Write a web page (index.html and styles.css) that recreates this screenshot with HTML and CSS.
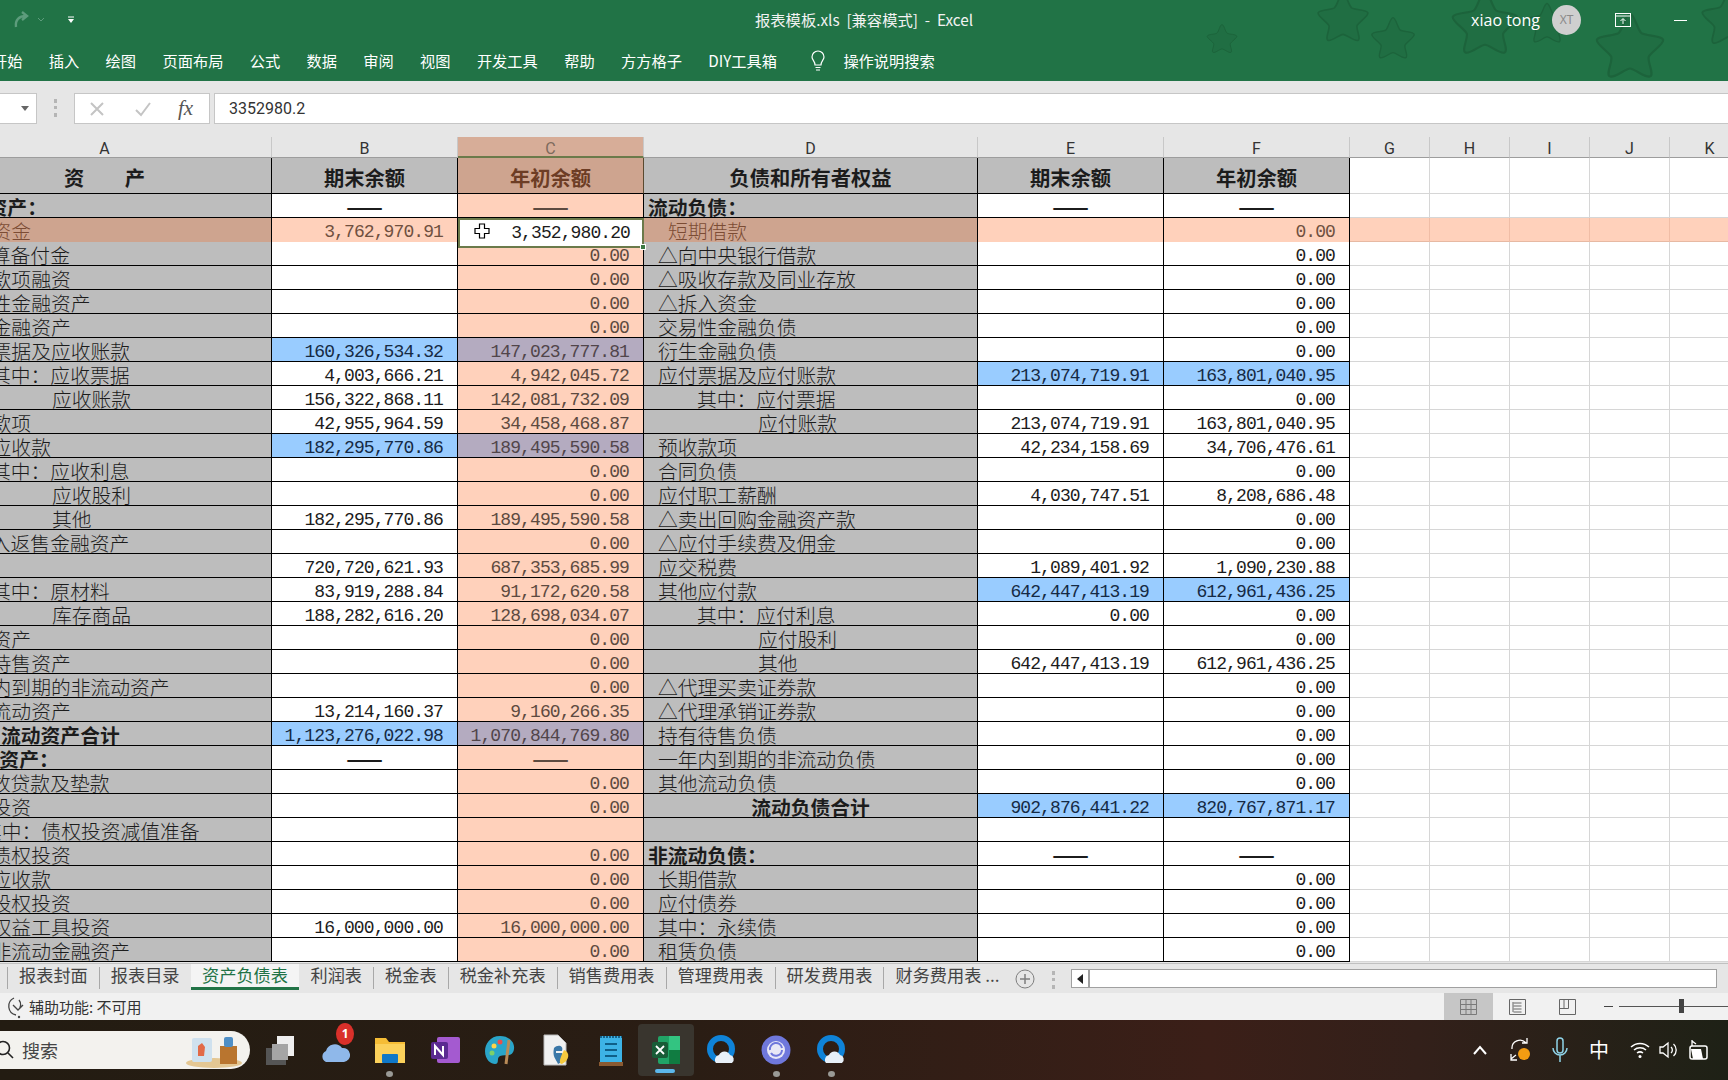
FILE: index.html
```html
<!DOCTYPE html>
<html lang="zh-CN">
<head>
<meta charset="utf-8">
<title>报表模板.xls - Excel</title>
<link rel="stylesheet" href="styles.css">
</head>
<body>
<svg class="defs" width="0" height="0"><symbol id="star" viewBox="0 0 100 100"><path d="M50 8 C56 8 60 30 66 35 C72 39 94 38 96 44 C98 50 78 62 76 68 C74 75 84 92 78 95 C72 98 56 84 50 84 C44 84 28 98 22 95 C16 92 26 75 24 68 C22 62 2 50 4 44 C6 38 28 39 34 35 C40 30 44 8 50 8Z"/></symbol></svg>

<header class="ribbon">
  <div class="stars">
    <svg class="st st1"><use href="#star"/></svg>
    <svg class="st st2"><use href="#star"/></svg>
    <svg class="st st3"><use href="#star"/></svg>
    <svg class="st st4"><use href="#star"/></svg>
    <svg class="st st5"><use href="#star"/></svg>
    <svg class="st st6"><use href="#star"/></svg>
    <svg class="st st7"><use href="#star"/></svg>
  </div>
  <div class="titlebar">
    <div class="qat">
      <svg width="20" height="20" viewBox="0 0 20 20"><path d="M4 17 C3 10 7 6 14 6 M10 2 L15 6 L10 10" fill="none" stroke="#5d9c7c" stroke-width="2.4"/></svg>
      <svg width="8" height="6" viewBox="0 0 8 6"><path d="M1 1 L4 4 L7 1" fill="none" stroke="#5d9c7c"/></svg>
      <svg class="qat-more" width="8" height="8" viewBox="0 0 8 8"><path d="M1 1H7" stroke="#fff"/><path d="M1 3H7L4 7Z" fill="#fff"/></svg>
    </div>
    <div class="title">报表模板.xls&nbsp; [兼容模式]&nbsp; -&nbsp; Excel</div>
    <div class="user">
      <span class="uname">xiao tong</span>
      <span class="avatar">XT</span>
      <svg class="ribbon-opt" width="16" height="14" viewBox="0 0 16 14"><rect x=".5" y=".5" width="15" height="13" fill="none" stroke="#fff"/><path d="M1 3H15" stroke="#fff"/><path d="M8 11V6M5.5 8L8 5.5L10.500 8" fill="none" stroke="#fff"/></svg>
      <span class="minimize"></span>
    </div>
  </div>
  <nav class="tabs">
    <span>开始</span><span>插入</span><span>绘图</span><span>页面布局</span><span>公式</span><span>数据</span><span>审阅</span><span>视图</span><span>开发工具</span><span>帮助</span><span>方方格子</span><span>DIY工具箱</span>
    <span class="tell">
      <svg width="16" height="22" viewBox="0 0 16 22"><path d="M5 15 C5 11 2 10 2 7 A6 6 0 0 1 14 7 C14 10 11 11 11 15Z M5.500 17.500H10.500 M6 20H10" fill="none" stroke="#fff" stroke-width="1.200"/></svg>
      操作说明搜索
    </span>
  </nav>
</header>

<section class="fbar">
  <div class="namebox"><svg width="8" height="5" viewBox="0 0 8 5"><path d="M0 0H8L4 5Z" fill="#666"/></svg></div>
  <div class="gripper"></div>
  <div class="fbtns">
    <svg width="16" height="16" viewBox="0 0 16 16"><path d="M2 2L14 14M14 2L2 14" stroke="#c4c4c4" stroke-width="2"/></svg>
    <svg width="18" height="16" viewBox="0 0 18 16"><path d="M2 9L7 14L16 2" fill="none" stroke="#c4c4c4" stroke-width="2"/></svg>
    <span class="fx">fx</span>
  </div>
  <div class="finput">3352980.2</div>
</section>

<main class="wrap">
  <div class="sheet">
    <div class="heads">
      <div>A</div><div>B</div><div class="on">C</div><div>D</div><div>E</div><div>F</div><div>G</div><div>H</div><div>I</div><div>J</div><div>K</div>
    </div>
    <div class="row top"><div class="t">资　　产</div><div class="t">期末余额</div><div class="t tc">年初余额</div><div class="t">负债和所有者权益</div><div class="t">期末余额</div><div class="t">年初余额</div></div>
    <div class="row"><div class="l i8 s">流动资产：</div><div class="n d">——</div><div class="n p d">——</div><div class="l i9 s">流动负债：</div><div class="n d">——</div><div class="n d">——</div></div>
    <div class="row h"><div class="l i1">货币资金</div><div class="n">3,762,970.91</div><div class="n sel"><svg class="cross" width="16" height="16" viewBox="0 0 16 16"><path d="M5.500 1H10.500V5.500H15V10.500H10.500V15H5.500V10.500H1V5.500H5.500Z" fill="#fff" stroke="#000" stroke-width="1.200"/></svg>3,352,980.20<span class="handle"></span></div><div class="l i6">短期借款</div><div class="n"></div><div class="n">0.00</div></div>
    <div class="row"><div class="l i7">结算备付金</div><div class="n"></div><div class="n p">0.00</div><div class="l i1">△向中央银行借款</div><div class="n"></div><div class="n">0.00</div></div>
    <div class="row"><div class="l i1">应收款项融资</div><div class="n"></div><div class="n p">0.00</div><div class="l i1">△吸收存款及同业存放</div><div class="n"></div><div class="n">0.00</div></div>
    <div class="row"><div class="l i1">交易性金融资产</div><div class="n"></div><div class="n p">0.00</div><div class="l i1">△拆入资金</div><div class="n"></div><div class="n">0.00</div></div>
    <div class="row"><div class="l i1">衍生金融资产</div><div class="n"></div><div class="n p">0.00</div><div class="l i1">交易性金融负债</div><div class="n"></div><div class="n">0.00</div></div>
    <div class="row"><div class="l i1">应收票据及应收账款</div><div class="n b">160,326,534.32</div><div class="n m">147,023,777.81</div><div class="l i1">衍生金融负债</div><div class="n"></div><div class="n">0.00</div></div>
    <div class="row"><div class="l i2">其中：应收票据</div><div class="n">4,003,666.21</div><div class="n p">4,942,045.72</div><div class="l i1">应付票据及应付账款</div><div class="n b">213,074,719.91</div><div class="n b">163,801,040.95</div></div>
    <div class="row"><div class="l i3">应收账款</div><div class="n">156,322,868.11</div><div class="n p">142,081,732.09</div><div class="l i2">其中：应付票据</div><div class="n"></div><div class="n">0.00</div></div>
    <div class="row"><div class="l i1">预付款项</div><div class="n">42,955,964.59</div><div class="n p">34,458,468.87</div><div class="l i3">应付账款</div><div class="n">213,074,719.91</div><div class="n">163,801,040.95</div></div>
    <div class="row"><div class="l i1">其他应收款</div><div class="n b">182,295,770.86</div><div class="n m">189,495,590.58</div><div class="l i1">预收款项</div><div class="n">42,234,158.69</div><div class="n">34,706,476.61</div></div>
    <div class="row"><div class="l i2">其中：应收利息</div><div class="n"></div><div class="n p">0.00</div><div class="l i1">合同负债</div><div class="n"></div><div class="n">0.00</div></div>
    <div class="row"><div class="l i3">应收股利</div><div class="n"></div><div class="n p">0.00</div><div class="l i1">应付职工薪酬</div><div class="n">4,030,747.51</div><div class="n">8,208,686.48</div></div>
    <div class="row"><div class="l i3">其他</div><div class="n">182,295,770.86</div><div class="n p">189,495,590.58</div><div class="l i1">△卖出回购金融资产款</div><div class="n"></div><div class="n">0.00</div></div>
    <div class="row"><div class="l i7">买入返售金融资产</div><div class="n"></div><div class="n p">0.00</div><div class="l i1">△应付手续费及佣金</div><div class="n"></div><div class="n">0.00</div></div>
    <div class="row"><div class="l i1">存货</div><div class="n">720,720,621.93</div><div class="n p">687,353,685.99</div><div class="l i1">应交税费</div><div class="n">1,089,401.92</div><div class="n">1,090,230.88</div></div>
    <div class="row"><div class="l i2">其中：原材料</div><div class="n">83,919,288.84</div><div class="n p">91,172,620.58</div><div class="l i1">其他应付款</div><div class="n b">642,447,413.19</div><div class="n b">612,961,436.25</div></div>
    <div class="row"><div class="l i3">库存商品</div><div class="n">188,282,616.20</div><div class="n p">128,698,034.07</div><div class="l i2">其中：应付利息</div><div class="n">0.00</div><div class="n">0.00</div></div>
    <div class="row"><div class="l i1">合同资产</div><div class="n"></div><div class="n p">0.00</div><div class="l i3">应付股利</div><div class="n"></div><div class="n">0.00</div></div>
    <div class="row"><div class="l i1">持有待售资产</div><div class="n"></div><div class="n p">0.00</div><div class="l i3">其他</div><div class="n">642,447,413.19</div><div class="n">612,961,436.25</div></div>
    <div class="row"><div class="l i1">一年内到期的非流动资产</div><div class="n"></div><div class="n p">0.00</div><div class="l i1">△代理买卖证券款</div><div class="n"></div><div class="n">0.00</div></div>
    <div class="row"><div class="l i1">其他流动资产</div><div class="n">13,214,160.37</div><div class="n p">9,160,266.35</div><div class="l i1">△代理承销证券款</div><div class="n"></div><div class="n">0.00</div></div>
    <div class="row"><div class="l i4 s">流动资产合计</div><div class="n b">1,123,276,022.98</div><div class="n m">1,070,844,769.80</div><div class="l i1">持有待售负债</div><div class="n"></div><div class="n">0.00</div></div>
    <div class="row"><div class="l i0 s">非流动资产：</div><div class="n d">——</div><div class="n p d">——</div><div class="l i1">一年内到期的非流动负债</div><div class="n"></div><div class="n">0.00</div></div>
    <div class="row"><div class="l i7">发放贷款及垫款</div><div class="n"></div><div class="n p">0.00</div><div class="l i1">其他流动负债</div><div class="n"></div><div class="n">0.00</div></div>
    <div class="row"><div class="l i1">债权投资</div><div class="n"></div><div class="n p">0.00</div><div class="l ctr s">流动负债合计</div><div class="n b">902,876,441.22</div><div class="n b">820,767,871.17</div></div>
    <div class="row"><div class="l i5">其中：债权投资减值准备</div><div class="n"></div><div class="n p"></div><div class="l"></div><div class="n"></div><div class="n"></div></div>
    <div class="row"><div class="l i1">其他债权投资</div><div class="n"></div><div class="n p">0.00</div><div class="l i9 s">非流动负债：</div><div class="n d">——</div><div class="n d">——</div></div>
    <div class="row"><div class="l i1">长期应收款</div><div class="n"></div><div class="n p">0.00</div><div class="l i1">长期借款</div><div class="n"></div><div class="n">0.00</div></div>
    <div class="row"><div class="l i1">长期股权投资</div><div class="n"></div><div class="n p">0.00</div><div class="l i1">应付债券</div><div class="n"></div><div class="n">0.00</div></div>
    <div class="row"><div class="l i1">其他权益工具投资</div><div class="n">16,000,000.00</div><div class="n p">16,000,000.00</div><div class="l i1">其中：永续债</div><div class="n"></div><div class="n">0.00</div></div>
    <div class="row"><div class="l i1">其他非流动金融资产</div><div class="n"></div><div class="n p">0.00</div><div class="l i1">租赁负债</div><div class="n"></div><div class="n">0.00</div></div>
  </div>
</main>

<section class="sheettabs">
  <div class="tablist">
    <span>报表封面</span><span>报表目录</span><span class="act">资产负债表</span><span>利润表</span><span>税金表</span><span>税金补充表</span><span>销售费用表</span><span>管理费用表</span><span>研发费用表</span><span>财务费用表 ...</span>
  </div>
  <svg class="plus" width="20" height="20" viewBox="0 0 20 20"><circle cx="10" cy="10" r="9" fill="none" stroke="#7f7f7f"/><path d="M10 5V15M5 10H15" stroke="#7f7f7f" stroke-width="1.500"/></svg>
  <div class="gripper g2"></div>
  <div class="hscroll"><div class="sbtn"><svg width="6" height="10" viewBox="0 0 6 10"><path d="M6 0V10L0 5Z" fill="#222"/></svg></div></div>
</section>

<footer class="status">
  <svg width="22" height="24" viewBox="0 0 22 24"><path d="M7 3A9 9 0 0 0 9 20M6 10L11 15L16 10M11 15A7 7 0 0 0 12 5" fill="none" stroke="#444" stroke-width="1.300"/><circle cx="12" cy="22" r="1.200" fill="#444"/></svg>
  <span class="acc">辅助功能: 不可用</span>
  <div class="views">
    <div class="vb vb-on"><svg width="17" height="16" viewBox="0 0 17 16"><path d="M.5.5H16.500V15.500H.5ZM.5 5.500H16.500M.5 10.500H16.500M6 .5V15.500M11 .5V15.500" fill="none" stroke="#7a7a7a"/></svg></div>
    <div class="vb"><svg width="17" height="16" viewBox="0 0 17 16"><path d="M.5.5H16.500V15.500H.5ZM4.500 4H12.500M4.500 7H12.500M4.500 10H12.500M4.500 13H12.500M4 3V13" fill="none" stroke="#666"/></svg></div>
    <div class="vb"><svg width="17" height="16" viewBox="0 0 17 16"><path d="M.5.5H16.500V15.500H.5ZM.5 9.500H9.500V.5M5 9.500V.5" fill="none" stroke="#666"/></svg></div>
  </div>
  <div class="zoom"><span class="zminus"></span><div class="ztrack"><span class="zthumb"></span></div></div>
</footer>

<footer class="taskbar">
  <div class="search">
    <svg class="mag" width="18" height="20" viewBox="0 0 18 20"><circle cx="4" cy="8" r="6.500" fill="none" stroke="#222" stroke-width="1.600"/><path d="M9 13L14 18" stroke="#222" stroke-width="1.600"/></svg>
    <span>搜索</span>
    <svg class="pill-art" width="56" height="36" viewBox="0 0 56 36"><ellipse cx="28" cy="31" rx="28" ry="5" fill="#e4c793"/><rect x="6" y="6" width="20" height="24" rx="2" fill="#cfe1ee"/><path d="M12 14L16 11L19 15L18 24L12 24Z" fill="#e26a47"/><rect x="34" y="14" width="17" height="18" fill="#b9752f"/><rect x="38" y="5" width="9" height="10" rx="2" fill="#4f8fc6"/></svg>
  </div>
  <div class="apps">
    <div class="app"><svg width="30" height="30" viewBox="0 0 30 30"><rect x="12" y="1" width="17" height="20" fill="#eee"/><rect x="1" y="13" width="20" height="17" fill="#555"/><rect x="7" y="9" width="16" height="16" fill="#a5a5a5"/></svg></div>
    <div class="app weather"><svg width="30" height="30" viewBox="0 0 30 30"><path d="M6 27A6 6 0 0 1 6 16A9 9 0 0 1 22 13A7 7 0 0 1 24 27Z" fill="#8fb8ea"/></svg><span class="badge">1</span></div>
    <div class="app"><svg width="30" height="30" viewBox="0 0 30 30"><path d="M0 3H11L14 7H30V28H0Z" fill="#f5bd36"/><rect y="9" width="30" height="19" fill="#fbd15b"/><rect x="7" y="19" width="16" height="9" rx="1" fill="#0f78c8"/></svg><span class="dot"></span></div>
    <div class="app"><svg width="30" height="30" viewBox="0 0 30 30"><rect x="7" y="2" width="23" height="26" rx="2" fill="#a45ad0"/><rect x="1" y="7" width="17" height="17" rx="2" fill="#5b2a91"/><path d="M5 20V11L13 20V11" fill="none" stroke="#fff" stroke-width="2"/></svg></div>
    <div class="app"><svg width="30" height="32" viewBox="0 0 30 32"><path d="M15 2C5 2 0 10 0 17C0 26 6 30 10 30C15 30 11 24 15 22C19 20 28 24 29 15C30 8 24 2 15 2Z" fill="#2aa5c9"/><circle cx="9" cy="12" r="2.500" fill="#ffd44a"/><circle cx="15" cy="8" r="2.500" fill="#e9504b"/><circle cx="7" cy="19" r="2.500" fill="#7dd16a"/><path d="M24 6L21 30" stroke="#b98b57" stroke-width="3"/></svg></div>
    <div class="app"><svg width="28" height="32" viewBox="0 0 28 32"><path d="M2 1H16L24 9V31H2Z" fill="#f1f1f1" stroke="#bbb"/><path d="M12 14C16 10 22 12 20 17H14V19H20C24 24 20 28 16 30C14 25 10 23 12 14Z" fill="#3b78a8"/><path d="M22 16C28 18 28 26 20 30C16 30 18 24 22 16Z" fill="#f5c93e"/></svg></div>
    <div class="app"><svg width="24" height="32" viewBox="0 0 24 32"><rect x="1" y="2" width="22" height="28" fill="#3db3e6"/><rect y="28" width="24" height="4" fill="#8a5a32"/><path d="M6 10H18M6 16H18M6 22H18" stroke="#0f5f88" stroke-width="2"/><path d="M1 3H23" stroke="#16638b" stroke-width="2" stroke-dasharray="2 1"/></svg></div>
    <div class="app app-on"><svg width="30" height="30" viewBox="0 0 30 30"><rect x="7" y="1" width="22" height="28" rx="2" fill="#21a366"/><rect x="18" y="1" width="11" height="14" fill="#33c481"/><rect x="18" y="15" width="11" height="14" fill="#107c41"/><rect x="1" y="7" width="16" height="16" rx="2" fill="#185c37"/><path d="M5 11L13 19M13 11L5 19" stroke="#fff" stroke-width="1.800"/></svg><span class="bar"></span></div>
    <div class="app"><svg width="30" height="30" viewBox="0 0 30 30"><circle cx="15" cy="14" r="11" fill="none" stroke="#0f83d8" stroke-width="6"/><path d="M10 28A5 5 0 0 1 13 20A6 6 0 0 1 24 20A4.500 4.500 0 0 1 26 28Z" fill="#e8f0f8"/></svg></div>
    <div class="app"><svg width="30" height="30" viewBox="0 0 30 30"><circle cx="15" cy="15" r="14.500" fill="#6f78dc"/><circle cx="15" cy="15" r="9" fill="#e8e8f6"/><path d="M9 15A6 6 0 0 1 21 13M21 15A6 6 0 0 1 10 18" fill="none" stroke="#6f78dc" stroke-width="2"/></svg><span class="dot"></span></div>
    <div class="app"><svg width="30" height="30" viewBox="0 0 30 30"><circle cx="15" cy="14" r="11" fill="none" stroke="#0f83d8" stroke-width="6"/><path d="M10 28A5 5 0 0 1 13 20A6 6 0 0 1 24 20A4.500 4.500 0 0 1 26 28Z" fill="#e8f0f8"/></svg><span class="dot"></span></div>
  </div>
  <div class="tray">
    <svg width="16" height="12" viewBox="0 0 16 12"><path d="M2 10L8 3L14 10" fill="none" stroke="#fff" stroke-width="2"/></svg>
    <svg width="22" height="26" viewBox="0 0 22 26"><path d="M3 12A8 8 0 0 1 17 6M18 1V6H13M2 17V23H8M2 22L7 18" fill="none" stroke="#fff" stroke-width="1.300"/><circle cx="15" cy="17" r="6" fill="#f39c12"/></svg>
    <svg width="16" height="26" viewBox="0 0 16 26"><rect x="5" y="1" width="6" height="15" rx="3" fill="none" stroke="#8fd3e8" stroke-width="1.500"/><path d="M1 11A7 7 0 0 0 15 11M8 18V25" fill="none" stroke="#8fd3e8" stroke-width="1.500"/></svg>
    <span class="ime">中</span>
    <svg width="20" height="18" viewBox="0 0 20 18"><path d="M1 6A13 13 0 0 1 19 6M4 9A9 9 0 0 1 16 9M7 12A5 5 0 0 1 13 12" fill="none" stroke="#fff" stroke-width="1.500"/><circle cx="10" cy="15.500" r="1.500" fill="#fff"/></svg>
    <svg class="spk" width="18" height="20" viewBox="0 0 18 20"><path d="M1 7H4L9 3V17L4 13H1Z" fill="none" stroke="#fff" stroke-width="1.300"/><path d="M12 7A4 4 0 0 1 12 13M14.500 4A8 8 0 0 1 14.500 16" fill="none" stroke="#fff" stroke-width="1.300"/></svg>
    <svg class="batt" width="20" height="22" viewBox="0 0 20 22"><rect x="1" y="7" width="17" height="13" rx="2" fill="none" stroke="#fff" stroke-width="1.500"/><path d="M4 20L2 10H12L14 20Z" fill="#fff"/><path d="M3 1V7M3 2L7 5" stroke="#fff" stroke-width="1.300"/></svg>
  </div>
</footer>
</body>
</html>
```
FILE: styles.css
```css
* { box-sizing: border-box; }
html, body { margin: 0; padding: 0; height: 1080px; overflow: hidden; background: #e6e6e6; }
body { display: flex; flex-direction: column; font-family: "Noto Sans CJK SC", "Noto Sans", sans-serif; color: #222; }
svg { display: block; flex: none; }
.defs { position: absolute; }

/* ribbon */
.ribbon { position: relative; flex: none; height: 81px; background: #217346; color: #fff; overflow: hidden; }
.stars { position: absolute; inset: 0; }
.st { position: absolute; fill: #206e43; stroke: #1c633b; stroke-width: 3; }
.st1 { left: 1206px; top: 20px; width: 32px; height: 36px; }
.st2 { left: 1316px; top: -12px; width: 54px; height: 56px; }
.st3 { left: 1370px; top: 14px; width: 46px; height: 46px; }
.st4 { left: 1450px; top: -14px; width: 70px; height: 70px; }
.st5 { left: 1522px; top: 0; width: 50px; height: 44px; }
.st6 { left: 1590px; top: 8px; width: 80px; height: 72px; }
.st7 { left: 1700px; top: -14px; width: 60px; height: 60px; }
.titlebar { position: relative; height: 40px; display: grid; grid-template-columns: 1fr auto 1fr; align-items: center; }
.qat { display: flex; align-items: center; gap: 5px; padding-left: 12px; }
.qat-more { margin-left: 17px; }
.title { font-size: 15.300px; color: #f2f2f2; padding-bottom: 2px; }
.user { display: flex; align-items: center; justify-content: flex-end; padding-right: 41px; }
.uname { font-size: 16px; font-family: "Open Sans", sans-serif; }
.avatar { width: 29px; height: 30px; border-radius: 50%; background: #cfcfcf; color: #8a8a8a; font: 12px/30px "Noto Sans", sans-serif; text-align: center; margin-left: 12px; }
.ribbon-opt { margin-left: 34px; }
.minimize { width: 13px; height: 1px; background: #fff; margin-left: 43px; }
.tabs { position: relative; height: 41px; display: flex; align-items: center; gap: 26.300px; margin-left: -8px; font-size: 15.250px; line-height: 20px; padding-bottom: 2px; white-space: nowrap; }
.tell { display: flex; align-items: center; gap: 17px; margin-left: 5px; }
.tell svg { margin-top: 3px; margin-left: 2px; }

/* formula bar */
.fbar { flex: none; height: 43px; padding-top: 12px; display: flex; background: #e6e6e6; }
.namebox { width: 37px; background: #fff; border: 1px solid #c6c6c6; border-left: 0; display: flex; align-items: center; justify-content: flex-end; padding-right: 7px; }
.gripper { width: 3px; height: 18px; margin: 6px 17px 0 17px; border-left: 3px dotted #b5b5b5; flex: none; }
.fbtns { width: 136px; background: #fff; border: 1px solid #c6c6c6; display: flex; align-items: center; gap: 29px; padding-left: 14px; }
.fx { font: italic 21px "Liberation Serif", serif; color: #555; margin-left: -3px; }
.finput { flex: 1; margin-left: 4px; background: #fff; border: 1px solid #c6c6c6; border-right: 0; padding-left: 14px; font: 16px/29px "Roboto", sans-serif; color: #333; }

/* sheet */
.wrap { flex: none; height: 839px; padding-top: 13px; overflow: hidden; background: #e6e6e6; }
.sheet { margin-left: -62px; width: 1800px; }
.heads { display: grid; grid-template-columns: 334px 186px 186px 334px 186px 186px repeat(5, 80px); height: 21px; background: #e6e6e6; }
.heads div { text-align: center; font: 16px/23px "Roboto", sans-serif; color: #333; border-right: 1px solid #c8c8c8; border-bottom: 1px solid #9d9d9d; overflow: hidden; }
.heads .on { background: #d7ad98; color: #7d6a5c; border-bottom: 2px solid #6b7a4a; }
.row { display: grid; grid-template-columns: 334px 186px 186px 334px 186px 186px; height: 24px; background-color: #fff; background-image: linear-gradient(to left, #d6d6d6 1px, transparent 1px), linear-gradient(to top, #d6d6d6 1px, transparent 1px); background-size: 80px 100%, 100% 100%; background-position: 1412px 0, 0 0; }
.row > div { border-right: 1px solid #000; border-bottom: 1px solid #000; font-size: 19.800px; line-height: 26px; white-space: nowrap; overflow: hidden; color: #1c1c1c; }
.top { height: 36px; }
.t { background: #bdbdbd; font-weight: 700; text-align: center; font-size: 20.300px !important; line-height: 38px !important; }
.tc { background: #cea48f; color: #6d3d25 !important; border-right-color: #5a4a30 !important; }
.l { background: #bdbdbd; font-weight: 300; }
.n { background: #fff; text-align: right; padding-right: 14px; font-family: "Liberation Mono", monospace; font-size: 18px !important; letter-spacing: -0.900px; line-height: 28px !important; }
.p { background: #ffd1bb; color: #5d4a40 !important; }
.b { background: #99ccff; color: #152a44 !important; }
.m { background: #b4abc0; color: #51454a !important; }
.d { text-align: center; padding-right: 0; letter-spacing: 0; font-family: "Noto Sans CJK SC", sans-serif; font-weight: 700; font-size: 21.500px !important; line-height: 24px !important; }
.s { font-weight: 700; }
.i0 { padding-left: 2px; }
.i1 { padding-left: 14px; }
.i2 { padding-left: 53px; }
.i3 { padding-left: 114px; }
.i4 { padding-left: 63px; }
.i5 { padding-left: 44px; }
.i6 { padding-left: 24px; }
.i7 { padding-left: 33px; }
.i8 { padding-left: 10px; }
.i9 { padding-left: 4px; }
.ctr { text-align: center; }

/* highlighted row */
.h { background-color: #ffd1bb; background-image: linear-gradient(to left, #f0bda6 1px, transparent 1px), linear-gradient(to top, #e7b9a3 1px, transparent 1px); }
.h > div { border-bottom-color: #4a2a1a; }
.h .l { background: #cea48f; color: #7c4c34; }
.h .n { background: #ffd1bb; color: #6f5040; }
.h .sel { position: relative; overflow: visible; background: #fff; color: #1c1c1c; border: 2px solid #6b7a4a; line-height: 26px !important; padding-right: 12px; }
.cross { position: absolute; left: 14px; top: 3px; }
.handle { position: absolute; right: -4px; bottom: -4px; width: 6px; height: 6px; background: #3c7a45; border: 1px solid #fff; }

/* sheet tabs */
.sheettabs { flex: none; height: 30px; display: flex; align-items: flex-start; background: #e6e6e6; border-top: 1px solid #c0c0c0; }
.tablist { width: 1006px; flex: none; margin-left: 7px; display: flex; font-size: 17.200px; line-height: 16px; white-space: nowrap; color: #444; overflow: hidden; }
.tablist span { padding: 0 11px; height: 22px; border-left: 1px solid #a8a8a8; margin-top: 3px; }
.tablist .act { height: 26px; margin-top: 0; line-height: 22px; background: #f4f4f4; color: #217346; border: 0; border-bottom: 3px solid #217346; padding: 0 11.500px; }
.tablist .act + span { border-left: 0; }
.plus { margin: 5px 0 0 2px; }
.g2 { margin: 7px 16px 0 17px; }
.hscroll { flex: none; width: 646px; height: 19px; margin: 5px 0 0 0; background: #fff; border: 1px solid #a0a0a0; }
.sbtn { width: 18px; height: 17px; border-right: 2px solid #a0a0a0; display: flex; align-items: center; justify-content: center; }

/* status */
.status { flex: none; height: 27px; background: #f1f1f1; display: flex; align-items: center; padding-left: 7px; }
.acc { font-size: 15px; color: #333; }
.views { display: flex; margin-left: auto; height: 27px; }
.vb { width: 49.500px; display: flex; align-items: center; justify-content: center; }
.vb-on { background: #c6c6c6; }
.zoom { width: 136px; display: flex; align-items: center; padding-left: 12px; }
.zminus { width: 9px; height: 1px; background: #444; }
.ztrack { position: relative; flex: 1; height: 1px; background: #555; margin-left: 6px; }
.zthumb { position: absolute; left: 60px; top: -7px; width: 5px; height: 14px; background: #444; }

/* taskbar */
.taskbar { flex: none; height: 60px; display: flex; align-items: center; background: linear-gradient(90deg, #231c12 0%, #2a1d14 40%, #3b1f18 70%, #33201a 82%, #1e2116 100%); }
.search { width: 250px; height: 38px; flex: none; background: #f3f2ee; border-radius: 0 19px 19px 0; display: flex; align-items: center; font-size: 18px; color: #444; }
.mag { margin-left: -1px; }
.search span { margin-left: 5px; }
.pill-art { margin-left: auto; margin-right: 8px; }
.apps { display: flex; margin-left: 2px; height: 60px; align-items: center; }
.app { position: relative; width: 55.200px; height: 52px; display: flex; align-items: center; justify-content: center; }
.app-on { background: #39352e; border-radius: 4px; }
.badge { position: absolute; left: 29px; top: -1px; width: 18px; height: 22px; border-radius: 50%; background: #d9302a; color: #fff; font: 700 12px/22px "Noto Sans", sans-serif; text-align: center; }
.dot { position: absolute; left: 24px; bottom: -1px; width: 7px; height: 6px; border-radius: 50%; background: #9a9a96; }
.bar { position: absolute; left: 17px; bottom: 3px; width: 20px; height: 4px; border-radius: 2px; background: #5cb8ec; }
.tray { margin-left: auto; display: flex; align-items: center; gap: 21px; padding-right: 19px; }
.spk { margin-left: -12px; }
.batt { margin-left: -9px; }
.ime { color: #fff; font-size: 20px; line-height: 26px; }
```
